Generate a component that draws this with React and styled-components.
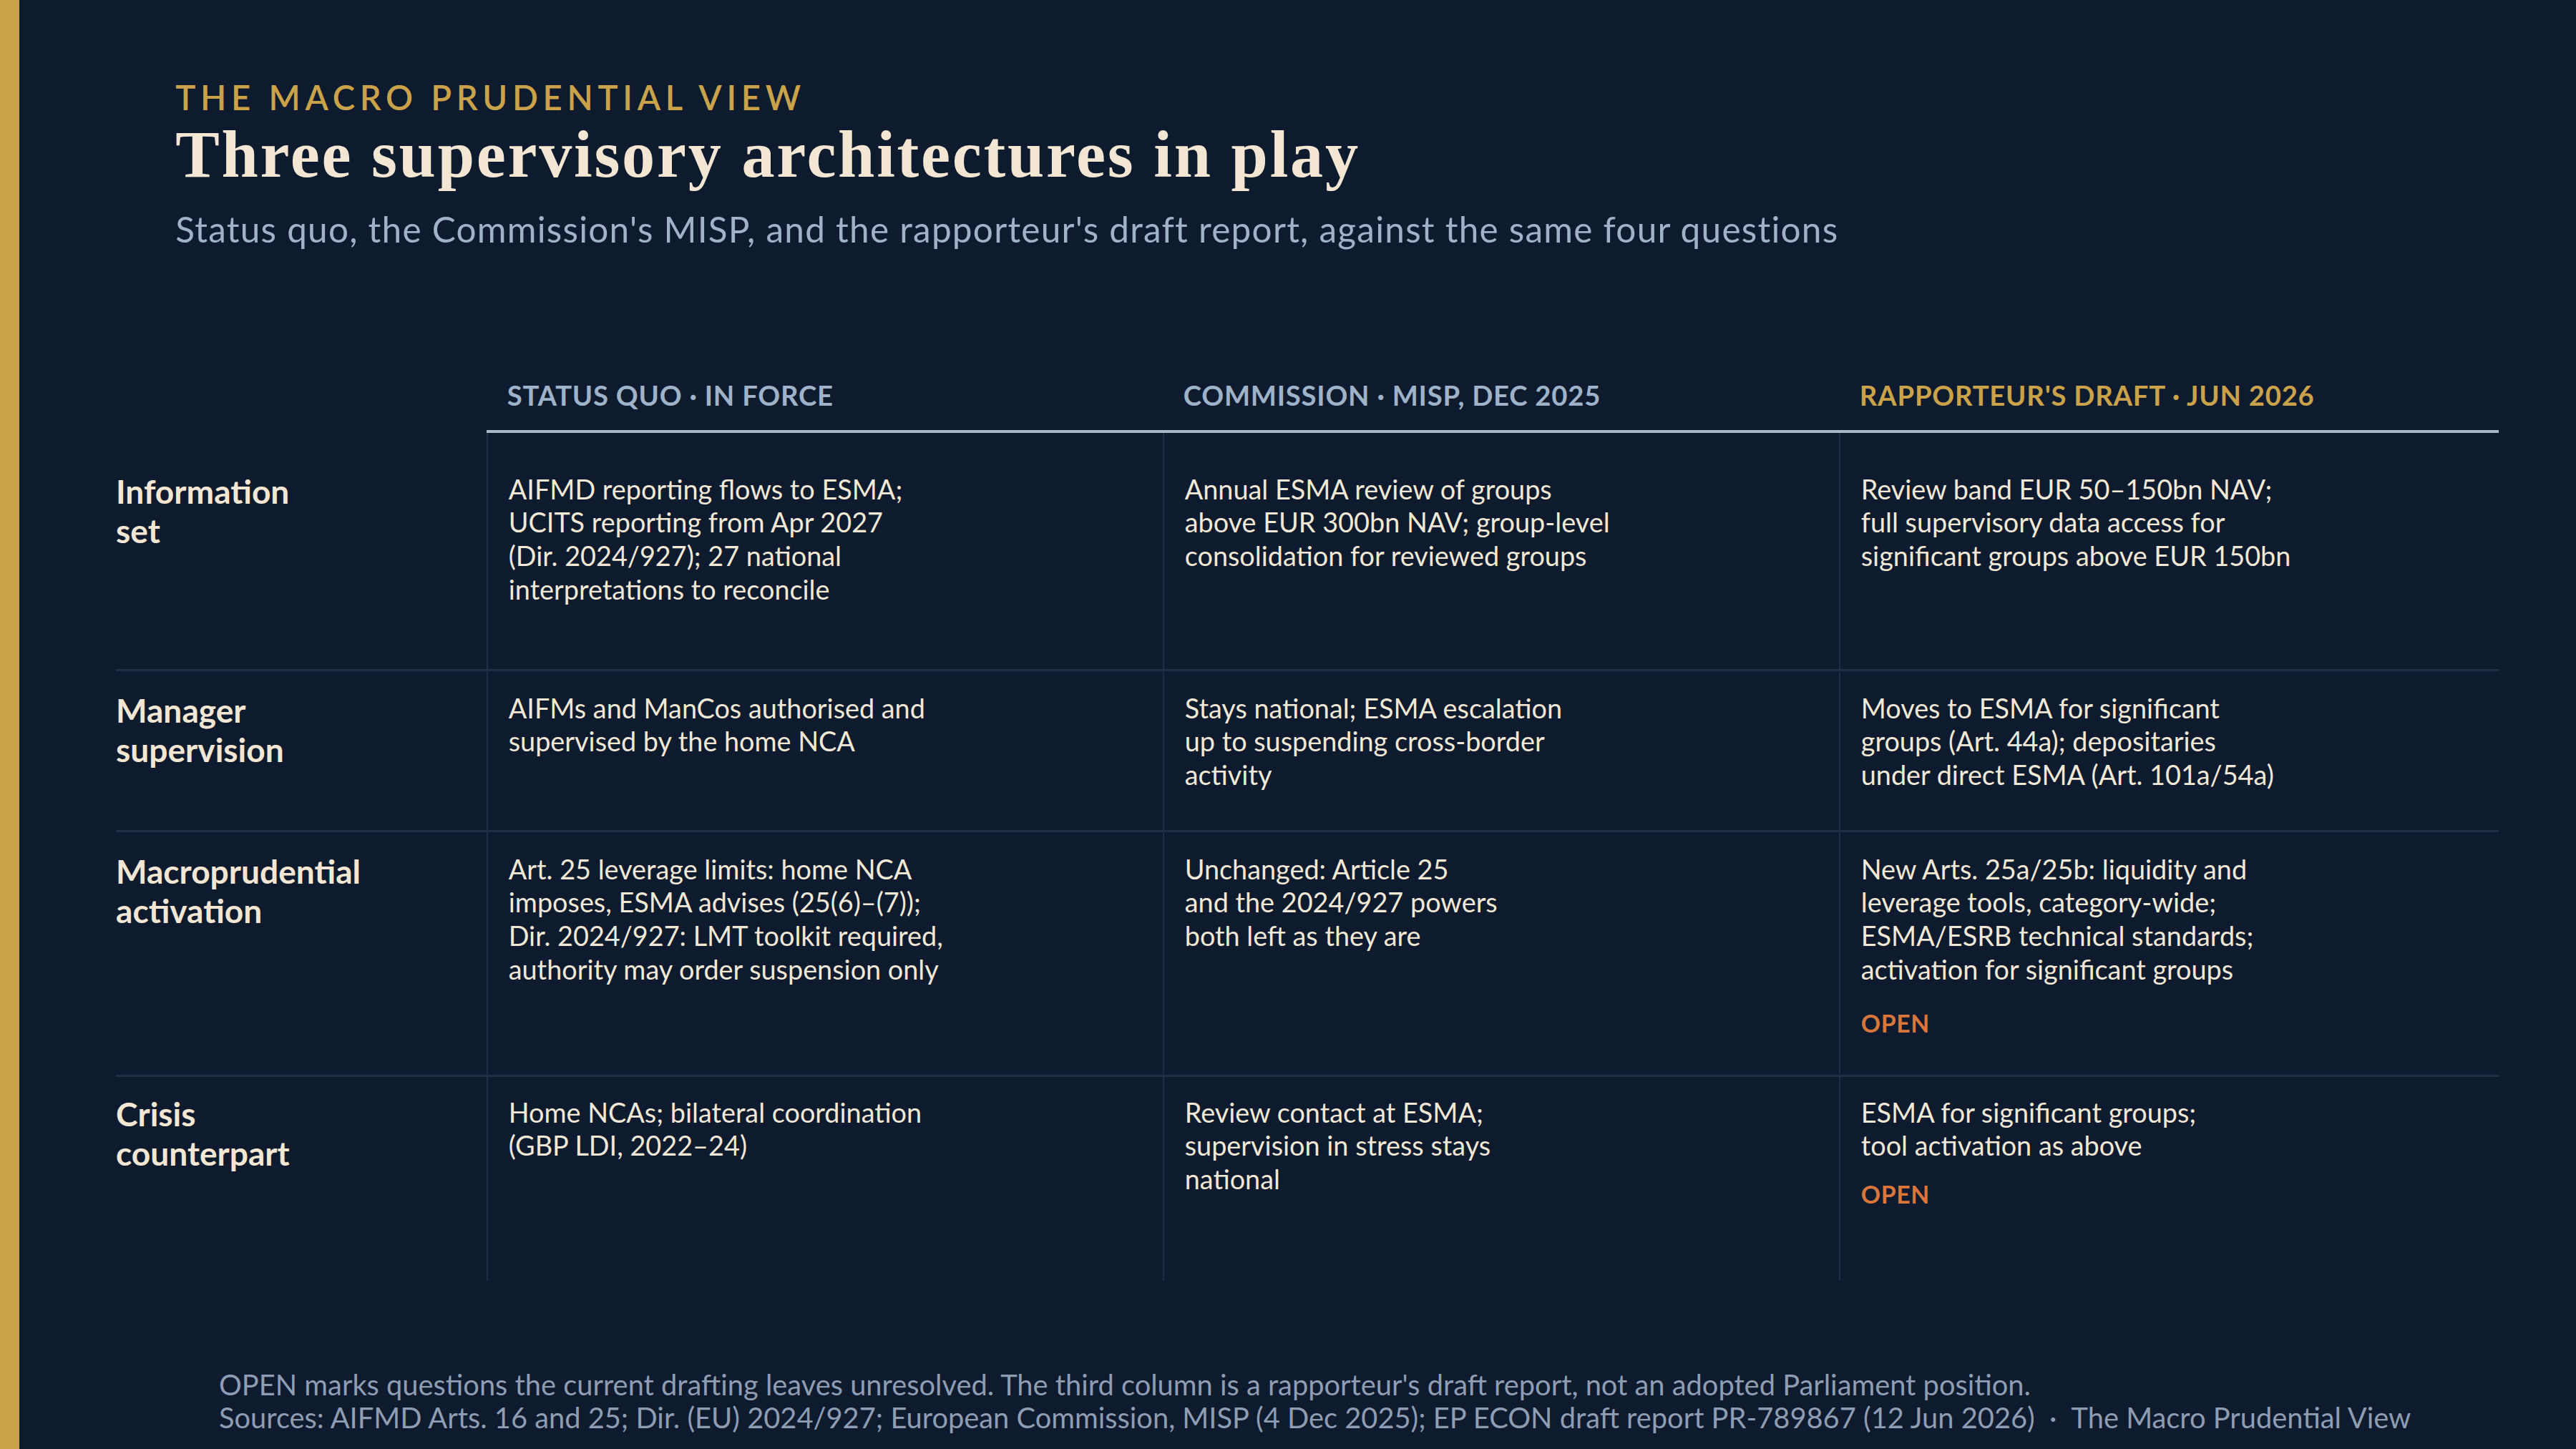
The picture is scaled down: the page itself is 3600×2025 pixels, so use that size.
import React from "react";
import styled, { createGlobalStyle } from "styled-components";

const GlobalStyle = createGlobalStyle`
  html, body {
    margin: 0;
    padding: 0;
    background: #0e1b2e;
  }
  body {
    font-family: Lato, "Noto Sans", sans-serif;
  }
`;

const Stage = styled.div`
  zoom: 2.25;
  width: 1600px;
  height: 900px;
  display: flex;
  background: #0e1b2e;
  overflow: hidden;
`;

const Rail = styled.div`
  flex: none;
  width: 12px;
  background: #c9a24a;
`;

const Main = styled.main`
  flex: 1;
  display: flex;
  flex-direction: column;
  padding-top: 48px;
`;

const Masthead = styled.header`
  padding-left: 97px;
`;

const Eyebrow = styled.div`
  font-size: 21px;
  font-weight: 600;
  line-height: 1.2;
  letter-spacing: 0.142em;
  color: #c9a24a;
`;

const Title = styled.h1`
  margin: 0;
  font-family: "Liberation Serif", "DejaVu Serif", serif;
  font-size: 41px;
  font-weight: 700;
  line-height: 1.12;
  letter-spacing: 0.03em;
  color: #f3e7d3;
`;

const Subtitle = styled.p`
  margin: 10px 0 0;
  font-size: 22px;
  line-height: 1.2;
  letter-spacing: 0.025em;
  color: #9fb2c7;
`;

const Grid = styled.div`
  margin: 80px 0 0 60px;
  width: 1480px;
  display: grid;
  grid-template-columns: 230px 420px 420px 410px;
  grid-template-rows: auto ${(p) => p.$rows};
`;

const HeadCell = styled.div`
  padding: 0 13px 11px;
  font-size: 17px;
  font-weight: 700;
  line-height: 1.2;
  letter-spacing: 0.02em;
  color: ${(p) => (p.$tone === "gold" ? "#c9a24a" : "#9fb3c8")};
  border-bottom: ${(p) => (p.$empty ? "none" : "2px solid #a7b6c9")};
`;

const Cell = styled.div`
  padding: ${(p) => p.$top}px 13px 0 ${(p) => (p.$label ? 0 : 13)}px;
  border-left: ${(p) => (p.$label ? "none" : "1px solid #1f2e44")};
  border-bottom: ${(p) => (p.$last ? "none" : "1.5px solid #1f2e44")};
`;

const RowLabel = styled.div`
  margin-top: -1px;
  font-size: 20.5px;
  font-weight: 700;
  line-height: 24.5px;
  color: #f3e7d3;
  white-space: pre-line;
`;

const Body = styled.div`
  font-size: 16.8px;
  line-height: 20.7px;
  color: #f1e8d6;
  white-space: pre-line;
`;

const Open = styled.div`
  margin-top: ${(p) => p.$gap}px;
  font-size: 15px;
  font-weight: 700;
  line-height: 18px;
  letter-spacing: 0.02em;
  color: #d9773a;
`;

const Footer = styled.footer`
  margin-top: 54px;
  padding-left: 124px;
  font-size: 17.7px;
  line-height: 20.7px;
  color: #8e9db2;
`;

const Sep = styled.span`
  padding: 0 9px;
`;

const columns = [
  { title: "STATUS QUO · IN FORCE", tone: "slate" },
  { title: "COMMISSION · MISP, DEC 2025", tone: "slate" },
  { title: "RAPPORTEUR'S DRAFT · JUN 2026", tone: "gold" },
];

const rows = [
  {
    label: "Information\nset",
    height: 148,
    top: 25,
    cells: [
      { text: "AIFMD reporting flows to ESMA;\nUCITS reporting from Apr 2027\n(Dir. 2024/927); 27 national\ninterpretations to reconcile" },
      { text: "Annual ESMA review of groups\nabove EUR 300bn NAV; group-level\nconsolidation for reviewed groups" },
      { text: "Review band EUR 50–150bn NAV;\nfull supervisory data access for\nsignificant groups above EUR 150bn" },
    ],
  },
  {
    label: "Manager\nsupervision",
    height: 100,
    top: 13,
    cells: [
      { text: "AIFMs and ManCos authorised and\nsupervised by the home NCA" },
      { text: "Stays national; ESMA escalation\nup to suspending cross-border\nactivity" },
      { text: "Moves to ESMA for significant\ngroups (Art. 44a); depositaries\nunder direct ESMA (Art. 101a/54a)" },
    ],
  },
  {
    label: "Macroprudential\nactivation",
    height: 152,
    top: 13,
    cells: [
      { text: "Art. 25 leverage limits: home NCA\nimposes, ESMA advises (25(6)–(7));\nDir. 2024/927: LMT toolkit required,\nauthority may order suspension only" },
      { text: "Unchanged: Article 25\nand the 2024/927 powers\nboth left as they are" },
      { text: "New Arts. 25a/25b: liquidity and\nleverage tools, category-wide;\nESMA/ESRB technical standards;\nactivation for significant groups", open: 14 },
    ],
  },
  {
    label: "Crisis\ncounterpart",
    height: 127,
    top: 12,
    cells: [
      { text: "Home NCAs; bilateral coordination\n(GBP LDI, 2022–24)" },
      { text: "Review contact at ESMA;\nsupervision in stress stays\nnational" },
      { text: "ESMA for significant groups;\ntool activation as above", open: 11 },
    ],
  },
];

export default function App() {
  const rowTracks = rows.map((r) => `${r.height}px`).join(" ");
  return (
    <>
      <GlobalStyle />
      <Stage>
        <Rail />
        <Main>
          <Masthead>
            <Eyebrow>THE MACRO PRUDENTIAL VIEW</Eyebrow>
            <Title>Three supervisory architectures in play</Title>
            <Subtitle>
              Status quo, the Commission's MISP, and the rapporteur's draft report, against the same four questions
            </Subtitle>
          </Masthead>

          <Grid $rows={rowTracks}>
            <HeadCell $empty />
            {columns.map((c) => (
              <HeadCell key={c.title} $tone={c.tone}>
                {c.title}
              </HeadCell>
            ))}
            {rows.map((r, i) => {
              const last = i === rows.length - 1;
              return (
                <React.Fragment key={r.label}>
                  <Cell $label $top={r.top} $last={last}>
                    <RowLabel>{r.label}</RowLabel>
                  </Cell>
                  {r.cells.map((c, j) => (
                    <Cell key={j} $top={r.top} $last={last}>
                      <Body>{c.text}</Body>
                      {c.open && <Open $gap={c.open}>OPEN</Open>}
                    </Cell>
                  ))}
                </React.Fragment>
              );
            })}
          </Grid>

          <Footer>
            <div>
              OPEN marks questions the current drafting leaves unresolved. The third column is a rapporteur's draft report, not an adopted Parliament position.
            </div>
            <div>
              Sources: AIFMD Arts. 16 and 25; Dir. (EU) 2024/927; European Commission, MISP (4 Dec 2025); EP ECON draft report PR-789867 (12 Jun 2026)
              <Sep>·</Sep>
              The Macro Prudential View
            </div>
          </Footer>
        </Main>
      </Stage>
    </>
  );
}
